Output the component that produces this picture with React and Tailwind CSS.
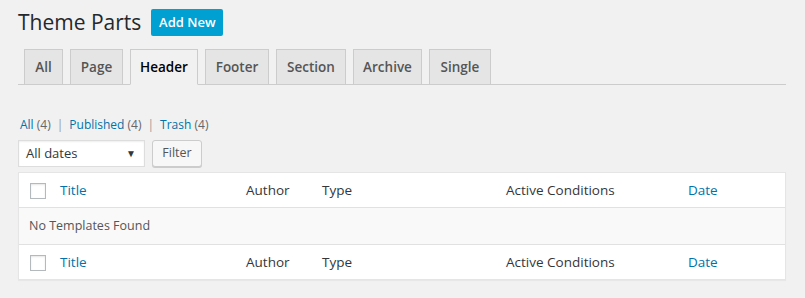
import React from 'react'

const font = { fontFamily: '"Segoe UI", "Open Sans", sans-serif' }

const tabs = [
  ['All', 'w-[39px]'],
  ['Page', 'w-[53px]'],
  ['Header', 'w-[68px]'],
  ['Footer', 'w-[64px]'],
  ['Section', 'w-[70px]'],
  ['Archive', 'w-[69px]'],
  ['Single', 'w-[62px]'],
]

function HeadRow({ top }) {
  return (
    <div className={`flex items-center h-[35px] pt-[1px] bg-white ${top ? 'border-b' : 'border-t'} border-[#e1e1e1] text-[13.5px] text-[#32373c]`}>
      <div className="w-[41px] pl-[11px] flex items-center">
        <span className="block w-[16px] h-[16px] border border-[#b4b9be] bg-white shadow-[inset_0_1px_2px_rgba(0,0,0,0.1)]" />
      </div>
      <div className="w-[186px] text-[#0073aa]">Title</div>
      <div className="w-[76px]">Author</div>
      <div className="w-[184px]">Type</div>
      <div className="w-[182px]">Active Conditions</div>
      <div className="text-[#0073aa]">Date</div>
    </div>
  )
}

export default function App() {
  return (
    <div className="w-[805px] h-[298px] bg-[#f1f1f1] overflow-hidden" style={font}>
      <div className="pl-[18px] pr-[19px] pt-[9px]">
        <div className="flex items-center gap-[10px] h-[27px]">
          <h1 className="text-[21px] text-[#23282d] leading-none">Theme Parts</h1>
          <button className="h-[27px] w-[72px] bg-[#00a0d2] text-white text-[13px] font-semibold rounded-[2px]">Add New</button>
        </div>

        <div className="mt-[13px] flex gap-[7px] pl-[6px] border-b border-[#ccc] h-[36px]">
          {tabs.map(([t, w]) => (
            <div
              key={t}
              className={`${w} h-[36px] flex items-center justify-center text-[13.5px] border border-[#ccc] font-semibold ${t === 'Header' ? 'bg-[#f1f1f1] border-b-[#f1f1f1] text-black' : 'bg-[#e5e5e5] text-[#555]'}`}
            >
              {t}
            </div>
          ))}
        </div>

        <div className="mt-[31px] pl-[2px] text-[12px] text-[#666] flex items-center gap-[6px]">
          <span><span className="text-[#0073aa]">All</span> (4)</span>
          <span className="text-[#999]">|</span>
          <span><span className="text-[#0073aa]">Published</span> (4)</span>
          <span className="text-[#999]">|</span>
          <span><span className="text-[#0073aa]">Trash</span> (4)</span>
        </div>

        <div className="mt-[6px] flex gap-[7px]">
          <div className="w-[127px] h-[27px] bg-white border border-[#ddd] shadow-[inset_0_1px_2px_rgba(0,0,0,0.07)] flex items-center justify-between pl-[7px] pr-[8px] text-[13px] text-[#32373c]">
            <span>All dates</span>
            <span className="text-[10px]">▼</span>
          </div>
          <button className="h-[27px] w-[50px] bg-[#f7f7f7] border border-[#ccc] rounded-[3px] shadow-[0_1px_0_#ccc] text-[12.5px] text-[#555]">Filter</button>
        </div>

        <div className="mt-[5px] border border-[#e5e5e5] shadow-[0_1px_1px_rgba(0,0,0,0.04)]">
          <HeadRow top />
          <div className="h-[36px] bg-[#f9f9f9] flex items-center pl-[10px] pt-[1px] text-[12.5px] text-[#555]">No Templates Found</div>
          <HeadRow />
        </div>
      </div>
    </div>
  )
}
